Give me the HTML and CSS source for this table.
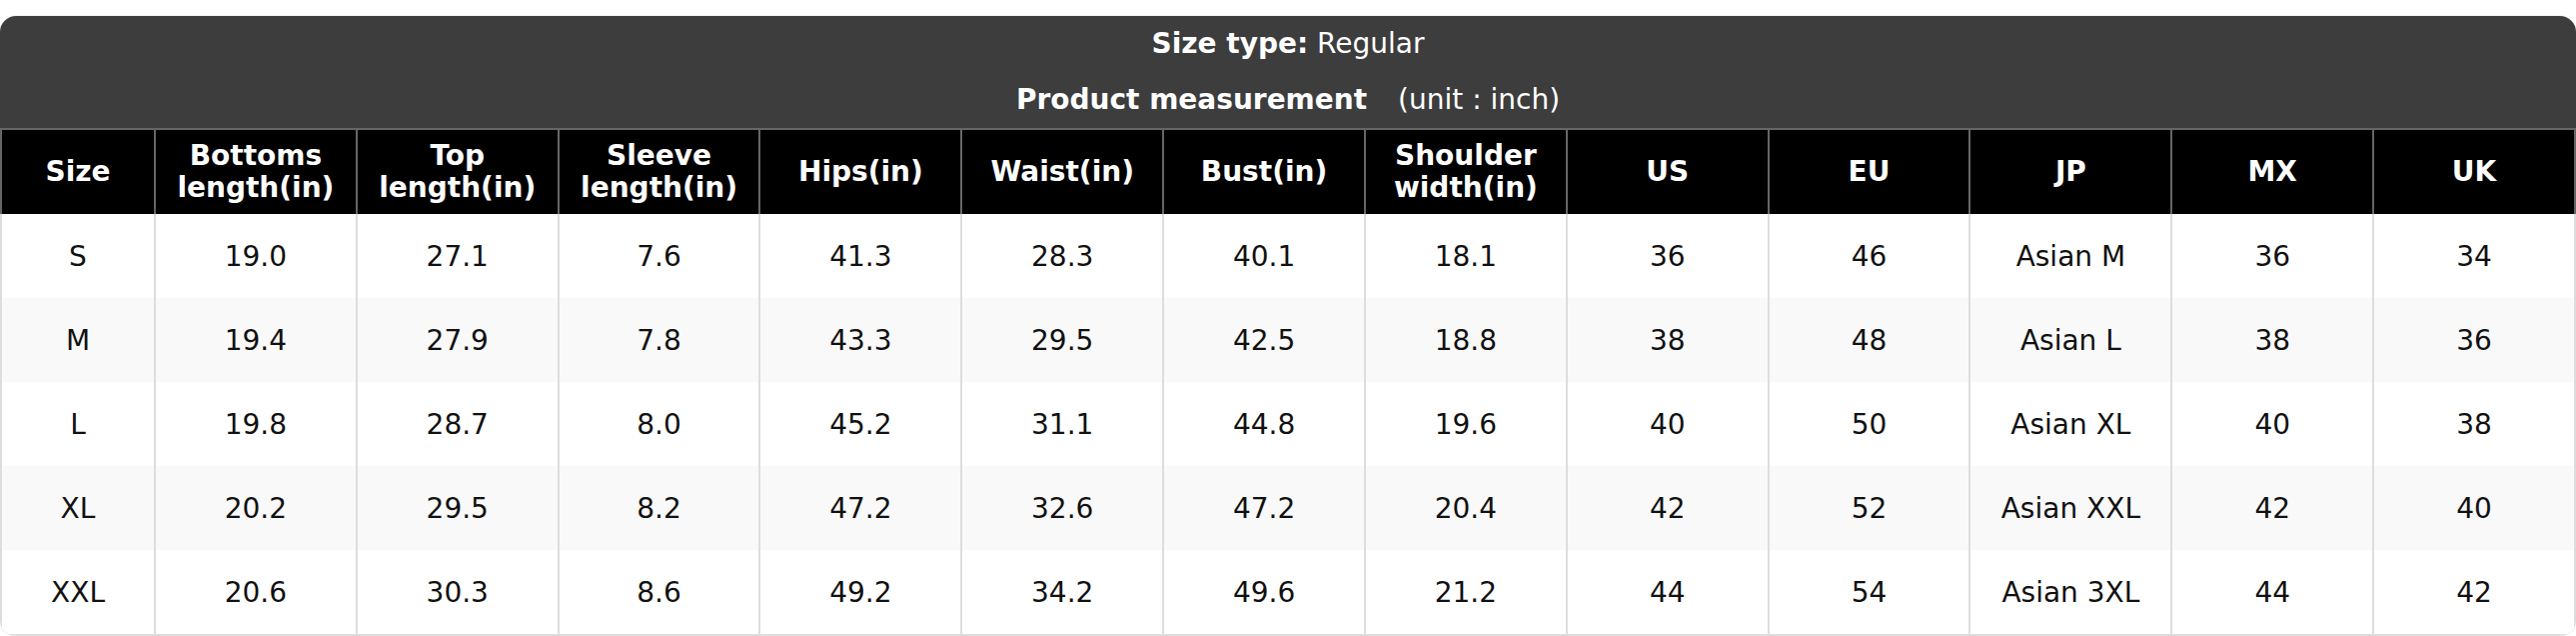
FILE: index.html
```html
<!DOCTYPE html>
<html lang="en">
<head>
<meta charset="utf-8">
<title>Size chart</title>
<link rel="stylesheet" href="styles.css">
</head>
<body>
<div class="chart">
  <div class="band">
    <div class="band-line"><b>Size type:</b> Regular</div>
    <div class="band-line"><b>Product measurement</b><span class="unit">(unit : inch)</span></div>
  </div>
  <table class="sizes">
    <colgroup>
      <col class="c-first">
      <col><col><col><col><col><col><col><col><col><col><col><col>
    </colgroup>
    <thead>
      <tr>
        <th>Size</th>
        <th>Bottoms<br>length(in)</th>
        <th>Top<br>length(in)</th>
        <th>Sleeve<br>length(in)</th>
        <th>Hips(in)</th>
        <th>Waist(in)</th>
        <th>Bust(in)</th>
        <th>Shoulder<br>width(in)</th>
        <th>US</th>
        <th>EU</th>
        <th>JP</th>
        <th>MX</th>
        <th>UK</th>
      </tr>
    </thead>
    <tbody>
      <tr><td>S</td><td>19.0</td><td>27.1</td><td>7.6</td><td>41.3</td><td>28.3</td><td>40.1</td><td>18.1</td><td>36</td><td>46</td><td>Asian M</td><td>36</td><td>34</td></tr>
      <tr><td>M</td><td>19.4</td><td>27.9</td><td>7.8</td><td>43.3</td><td>29.5</td><td>42.5</td><td>18.8</td><td>38</td><td>48</td><td>Asian L</td><td>38</td><td>36</td></tr>
      <tr><td>L</td><td>19.8</td><td>28.7</td><td>8.0</td><td>45.2</td><td>31.1</td><td>44.8</td><td>19.6</td><td>40</td><td>50</td><td>Asian XL</td><td>40</td><td>38</td></tr>
      <tr><td>XL</td><td>20.2</td><td>29.5</td><td>8.2</td><td>47.2</td><td>32.6</td><td>47.2</td><td>20.4</td><td>42</td><td>52</td><td>Asian XXL</td><td>42</td><td>40</td></tr>
      <tr><td>XXL</td><td>20.6</td><td>30.3</td><td>8.6</td><td>49.2</td><td>34.2</td><td>49.6</td><td>21.2</td><td>44</td><td>54</td><td>Asian 3XL</td><td>44</td><td>42</td></tr>
    </tbody>
  </table>
</div>
</body>
</html>
```

FILE: styles.css
```css
html, body {
  margin: 0;
  padding: 0;
  background: #ffffff;
}

body {
  padding-top: 16px;
  font-family: "DejaVu Sans", "Liberation Sans", sans-serif;
  font-size: 28px;
  color: #000000;
}

.chart {
  border-radius: 16px;
  overflow: hidden;
  box-shadow: 0 0 2px rgba(0, 0, 0, 0.18);
}

.band {
  background: #3d3d3d;
  color: #ffffff;
  text-align: center;
  height: 112px;
}

.band-line {
  height: 56px;
  line-height: 56px;
}

.band-line b {
  font-weight: bold;
}

.unit {
  margin-left: 31px;
}

.sizes {
  width: 100%;
  border-collapse: collapse;
  table-layout: fixed;
}

.c-first {
  width: 154px;
}

.sizes th {
  background: #000000;
  color: #ffffff;
  font-weight: bold;
  line-height: 32px;
  height: 84px;
  padding: 0 4px;
  border: 2px solid #666666;
  border-bottom: 0;
  text-align: center;
  vertical-align: middle;
}

.sizes td {
  height: 84px;
  padding: 0 4px;
  text-align: center;
  vertical-align: middle;
  border-left: 2px solid #dddddd;
  border-right: 2px solid #dddddd;
  color: #111111;
}

.sizes tbody tr:nth-child(even) td {
  background: #f9f9f9;
}

.sizes tbody tr:last-child td {
  border-bottom: 2px solid #dddddd;
}
```
